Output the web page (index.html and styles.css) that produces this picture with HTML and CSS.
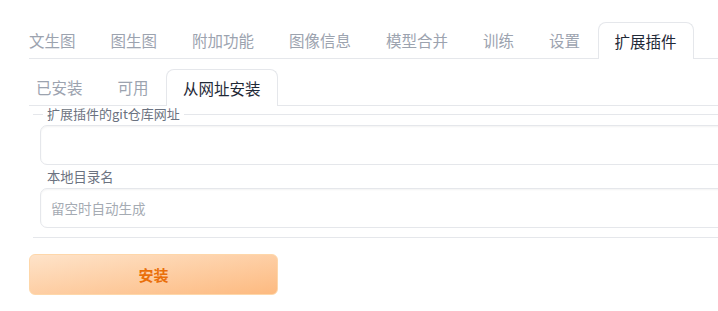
FILE: index.html
```html
<!DOCTYPE html>
<html lang="zh-CN">
<head>
    <meta charset="UTF-8">
    <meta name="viewport" content="width=device-width, initial-scale=1.0">
    <title>扩展插件</title>
    <link rel="stylesheet" href="styles.css">
</head>
<body>

    <div class="page">
        <!-- Main tabs -->
        <div class="tab-nav">
            <div class="tab">文生图</div>
            <div class="tab">图生图</div>
            <div class="tab">附加功能</div>
            <div class="tab">图像信息</div>
            <div class="tab">模型合并</div>
            <div class="tab">训练</div>
            <div class="tab">设置</div>
            <div class="tab selected">扩展插件</div>
        </div>

        <!-- Extension tabs -->
        <div class="tab-nav sub-nav">
            <div class="tab">已安装</div>
            <div class="tab">可用</div>
            <div class="tab selected">从网址安装</div>
        </div>

        <fieldset class="form">
            <legend>扩展插件的git仓库网址</legend>
            <input type="text" class="textbox">
            <label class="field-label">本地目录名</label>
            <input type="text" class="textbox" placeholder="留空时自动生成">
        </fieldset>

        <button class="install-btn">安装</button>
    </div>

</body>
</html>
```

FILE: styles.css
```css
body {
    margin: 0;
    padding: 0;
    background: #ffffff;
    font-family: "Noto Sans CJK SC", "Noto Sans", sans-serif;
    overflow: hidden;
}

.page {
    width: 760px;
    padding: 22px 0 0 29px;
}

.tab-nav {
    display: flex;
    align-items: flex-end;
    height: 36px;
    border-bottom: 1px solid #e5e7eb;
}

.tab {
    display: flex;
    align-items: center;
    height: 36px;
    padding: 0 17.5px;
    font-size: 15.5px;
    white-space: nowrap;
    color: #9ca3af;
    cursor: pointer;
}

.tab:first-child {
    padding-left: 0;
}

.tab.selected {
    margin-bottom: -1px;
    height: 36px;
    padding: 0 16px;
    background: #ffffff;
    border: 1px solid #e5e7eb;
    border-bottom: none;
    border-radius: 8px 8px 0 0;
    color: #1f2937;
}

.sub-nav {
    margin-top: 10px;
}

.sub-nav .tab:first-child {
    padding-left: 7px;
}

.form {
    margin: 0 0 0 4px;
    padding: 0 0 9px 7px;
    border: none;
    border-top: 1px solid #e5e7eb;
    border-bottom: 1px solid #e5e7eb;
}

.form legend {
    margin-left: 3px;
    padding: 0 4px;
    font-size: 13px;
    line-height: 16px;
    color: #6b7280;
}

.textbox {
    display: block;
    box-sizing: border-box;
    width: 100%;
    height: 40px;
    margin-top: 3px;
    padding: 0 10px;
    border: 1px solid #e5e7eb;
    border-radius: 7px;
    box-shadow: inset 0 1px 2px rgba(0, 0, 0, 0.05);
    font-family: inherit;
    font-size: 13.5px;
    color: #374151;
    outline: none;
}

.textbox::placeholder {
    color: #a5abb3;
}

.field-label {
    display: block;
    margin: 4px 0 0 7px;
    font-size: 13.3px;
    line-height: 16px;
    color: #6b7280;
}

.install-btn {
    display: block;
    width: 249px;
    height: 41px;
    margin-top: 16px;
    border: 1px solid #fed7aa;
    border-radius: 6px;
    background: linear-gradient(to bottom right, #fee3c9, #fdba80);
    font-family: inherit;
    font-size: 15px;
    font-weight: bold;
    color: #ea6f0a;
    cursor: pointer;
}
```
